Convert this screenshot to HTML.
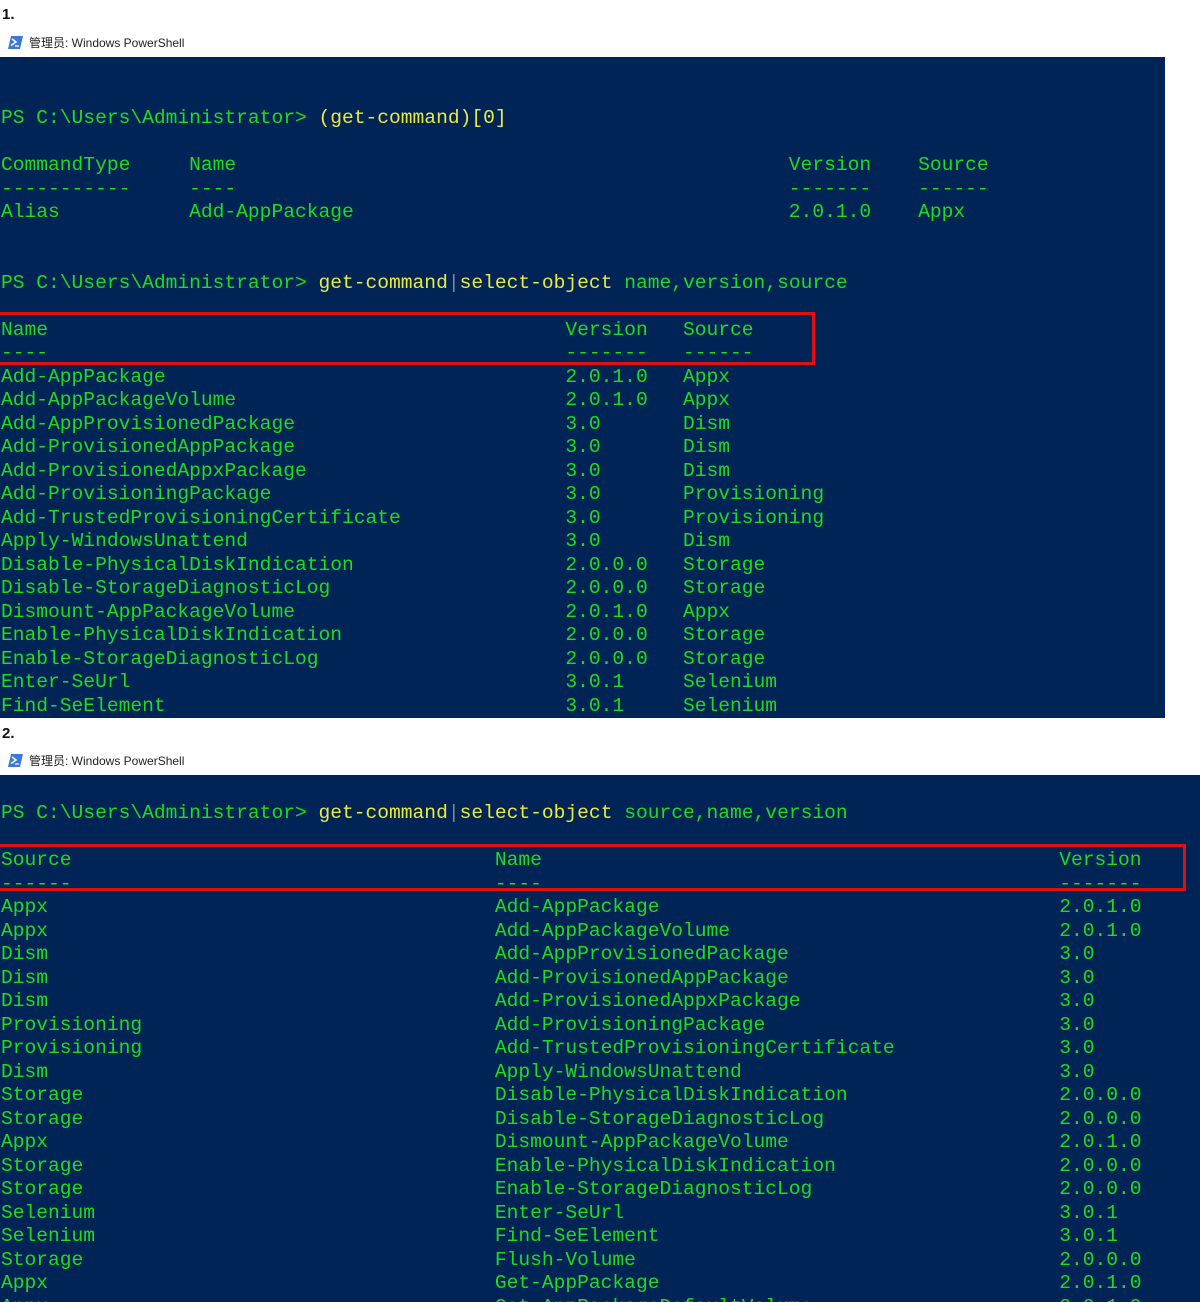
<!DOCTYPE html>
<html><head><meta charset="utf-8"><style>
body{margin:0;width:1200px;height:1302px;background:#fff;position:relative;overflow:hidden;font-family:"Liberation Sans","Noto Sans CJK SC",sans-serif}
.num{position:absolute;left:2px;font-weight:bold;font-size:15px;color:#111}
.title{position:absolute;left:8px;font-size:12px;color:#222;display:flex;align-items:center}
.title svg{margin-right:6px}
.panel{position:absolute;left:0;background:#012456;overflow:hidden}
pre{position:absolute;left:1px;margin:0;font-family:"Liberation Mono","Noto Sans CJK SC",monospace;font-size:19.6px;line-height:23.5px;color:#1fdc1f;white-space:pre}
.y{color:#eaea40}.bar{color:#7a8a9a}
.box{position:absolute;border:3px solid #e01010;box-sizing:border-box}
</style></head><body>
<div class="num" style="top:6px">1.</div>
<div class="title" style="top:34px"><svg width="15" height="13" viewBox="0 0 15 13"><path d="M3 0H15L12 13H0Z" fill="#3b78d8"/><path d="M4 3l4 3-5 3.5" stroke="#fff" stroke-width="1.5" fill="none"/><path d="M7 10h4" stroke="#fff" stroke-width="1.3"/></svg>管理员: Windows PowerShell</div>
<div class="panel" style="top:57px;width:1165px;height:661px">
<pre style="top:50px">PS C:\Users\Administrator&gt; <span class="y">(get-command)[0]</span>

CommandType     Name                                               Version    Source
-----------     ----                                               -------    ------
Alias           Add-AppPackage                                     2.0.1.0    Appx


PS C:\Users\Administrator&gt; <span class="y">get-command</span><span class="bar">|</span><span class="y">select-object</span> name,version,source

Name                                            Version   Source
----                                            -------   ------
Add-AppPackage                                  2.0.1.0   Appx
Add-AppPackageVolume                            2.0.1.0   Appx
Add-AppProvisionedPackage                       3.0       Dism
Add-ProvisionedAppPackage                       3.0       Dism
Add-ProvisionedAppxPackage                      3.0       Dism
Add-ProvisioningPackage                         3.0       Provisioning
Add-TrustedProvisioningCertificate              3.0       Provisioning
Apply-WindowsUnattend                           3.0       Dism
Disable-PhysicalDiskIndication                  2.0.0.0   Storage
Disable-StorageDiagnosticLog                    2.0.0.0   Storage
Dismount-AppPackageVolume                       2.0.1.0   Appx
Enable-PhysicalDiskIndication                   2.0.0.0   Storage
Enable-StorageDiagnosticLog                     2.0.0.0   Storage
Enter-SeUrl                                     3.0.1     Selenium
Find-SeElement                                  3.0.1     Selenium</pre>
<div class="box" style="left:-3px;top:255px;width:818px;height:53px"></div>
</div>
<div class="num" style="top:725px">2.</div>
<div class="title" style="top:752px"><svg width="15" height="13" viewBox="0 0 15 13"><path d="M3 0H15L12 13H0Z" fill="#3b78d8"/><path d="M4 3l4 3-5 3.5" stroke="#fff" stroke-width="1.5" fill="none"/><path d="M7 10h4" stroke="#fff" stroke-width="1.3"/></svg>管理员: Windows PowerShell</div>
<div class="panel" style="top:775px;width:1200px;height:527px">
<pre style="top:27px">PS C:\Users\Administrator&gt; <span class="y">get-command</span><span class="bar">|</span><span class="y">select-object</span> source,name,version

Source                                    Name                                            Version
------                                    ----                                            -------
Appx                                      Add-AppPackage                                  2.0.1.0
Appx                                      Add-AppPackageVolume                            2.0.1.0
Dism                                      Add-AppProvisionedPackage                       3.0
Dism                                      Add-ProvisionedAppPackage                       3.0
Dism                                      Add-ProvisionedAppxPackage                      3.0
Provisioning                              Add-ProvisioningPackage                         3.0
Provisioning                              Add-TrustedProvisioningCertificate              3.0
Dism                                      Apply-WindowsUnattend                           3.0
Storage                                   Disable-PhysicalDiskIndication                  2.0.0.0
Storage                                   Disable-StorageDiagnosticLog                    2.0.0.0
Appx                                      Dismount-AppPackageVolume                       2.0.1.0
Storage                                   Enable-PhysicalDiskIndication                   2.0.0.0
Storage                                   Enable-StorageDiagnosticLog                     2.0.0.0
Selenium                                  Enter-SeUrl                                     3.0.1
Selenium                                  Find-SeElement                                  3.0.1
Storage                                   Flush-Volume                                    2.0.0.0
Appx                                      Get-AppPackage                                  2.0.1.0
Appx                                      Get-AppPackageDefaultVolume                     2.0.1.0</pre>
<div class="box" style="left:-3px;top:69px;width:1189px;height:47px"></div>
</div>
</body></html>
